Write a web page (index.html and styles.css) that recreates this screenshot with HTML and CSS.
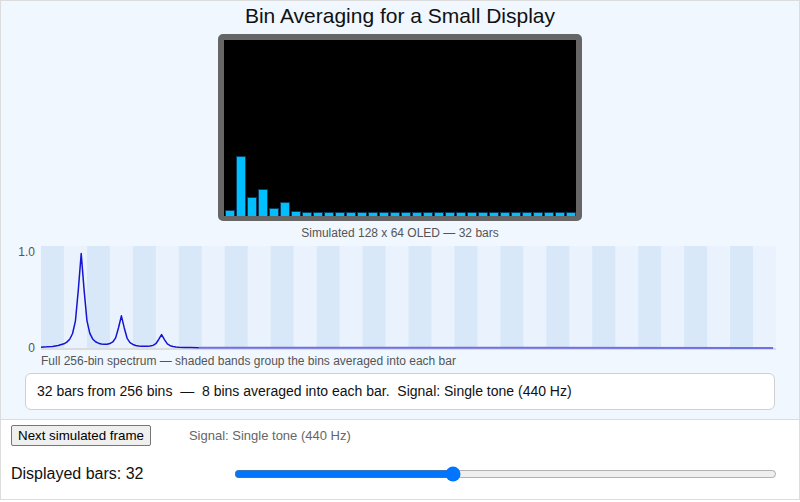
FILE: index.html
```html
<!DOCTYPE html>
<html>
<head>
<meta charset="utf-8">
<title>Bin Averaging for a Small Display</title>
<link rel="stylesheet" href="styles.css">
</head>
<body>
<div class="app">
  <div class="stage">
    <h1 class="title">Bin Averaging for a Small Display</h1>
    <div class="oled">
      <div class="screen">
        <div class="bar" style="height:6px"></div>
        <div class="bar" style="height:60px"></div>
        <div class="bar" style="height:19px"></div>
        <div class="bar" style="height:27px"></div>
        <div class="bar" style="height:8px"></div>
        <div class="bar" style="height:14px"></div>
        <div class="bar" style="height:5px"></div>
        <div class="bar" style="height:4px"></div>
        <div class="bar" style="height:4px"></div>
        <div class="bar" style="height:4px"></div>
        <div class="bar" style="height:4px"></div>
        <div class="bar" style="height:4px"></div>
        <div class="bar" style="height:4px"></div>
        <div class="bar" style="height:4px"></div>
        <div class="bar" style="height:4px"></div>
        <div class="bar" style="height:4px"></div>
        <div class="bar" style="height:4px"></div>
        <div class="bar" style="height:4px"></div>
        <div class="bar" style="height:4px"></div>
        <div class="bar" style="height:4px"></div>
        <div class="bar" style="height:4px"></div>
        <div class="bar" style="height:4px"></div>
        <div class="bar" style="height:4px"></div>
        <div class="bar" style="height:4px"></div>
        <div class="bar" style="height:4px"></div>
        <div class="bar" style="height:4px"></div>
        <div class="bar" style="height:4px"></div>
        <div class="bar" style="height:4px"></div>
        <div class="bar" style="height:4px"></div>
        <div class="bar" style="height:4px"></div>
        <div class="bar" style="height:4px"></div>
        <div class="bar" style="height:4px"></div>
      </div>
    </div>
    <p class="caption">Simulated 128 x 64 OLED — 32 bars</p>
    <svg class="spectrum" width="800" height="112" viewBox="0 0 800 112">
      <rect class="band-light" x="40" y="4" width="735" height="102"/>
      <g class="band-dark">
        <rect x="40" y="4" width="22.97" height="102"/>
        <rect x="85.94" y="4" width="22.97" height="102"/>
        <rect x="131.88" y="4" width="22.97" height="102"/>
        <rect x="177.81" y="4" width="22.97" height="102"/>
        <rect x="223.75" y="4" width="22.97" height="102"/>
        <rect x="269.69" y="4" width="22.97" height="102"/>
        <rect x="315.63" y="4" width="22.97" height="102"/>
        <rect x="361.56" y="4" width="22.97" height="102"/>
        <rect x="407.5" y="4" width="22.97" height="102"/>
        <rect x="453.44" y="4" width="22.97" height="102"/>
        <rect x="499.38" y="4" width="22.97" height="102"/>
        <rect x="545.31" y="4" width="22.97" height="102"/>
        <rect x="591.25" y="4" width="22.97" height="102"/>
        <rect x="637.19" y="4" width="22.97" height="102"/>
        <rect x="683.13" y="4" width="22.97" height="102"/>
        <rect x="729.06" y="4" width="22.97" height="102"/>
      </g>
      <rect class="axis" x="40" y="106" width="735" height="2"/>
      <polyline class="curve" points="40,105.16 45.74,104.87 51.48,104.41 57.23,103.56 62.97,101.82 65.84,100.14 68.71,97.22 71.58,91.5 74.45,78.8 77.32,47.7 80.2,11.6 83.07,47.6 85.94,78.6 88.81,91.3 91.68,96.93 94.55,99.76 97.42,101.2 100.29,101.97 103.16,102.29 106.04,102.21 108.91,101.58 111.78,99.95 114.65,95.87 117.52,85.74 120.39,73.84 123.26,85.94 126.13,96.3 129,100.55 131.88,102.45 134.75,103.44 137.62,103.96 140.49,104.24 143.36,104.37 146.23,104.31 149.1,104.04 151.97,103.37 154.84,101.71 157.71,97.49 160.59,92.58 163.46,97.58 166.33,101.9 169.2,103.68 172.07,104.48 174.94,104.92 177.81,105.16 183.55,105.43 189.3,105.59 197.91,105.71"/>
      <line class="flat" x1="197.91" y1="105.7" x2="772.13" y2="105.9"/>
      <text class="tick" x="34" y="14">1.0</text>
      <text class="tick" x="34" y="110">0</text>
    </svg>
    <p class="note">Full 256-bin spectrum — shaded bands group the bins averaged into each bar</p>
    <div class="info">32 bars from 256 bins  —  8 bins averaged into each bar.  Signal: Single tone (440 Hz)</div>
  </div>
  <div class="controls">
    <div class="row">
      <button class="btn" type="button">Next simulated frame</button>
      <span class="signal">Signal: Single tone (440 Hz)</span>
    </div>
    <div class="row slider-row">
      <label class="bars-label" for="bars">Displayed bars: 32</label>
      <input class="slider" id="bars" type="range" min="0" max="80" value="32">
    </div>
  </div>
</div>
</body>
</html>
```
FILE: styles.css
```css
html, body {
  margin: 0;
  padding: 0;
  background: #ffffff;
}

body {
  font-family: "Liberation Sans", Arial, sans-serif;
  color: #111;
}

.app {
  width: 800px;
  height: 500px;
  box-sizing: border-box;
  border: 1px solid #dcdcdc;
  display: flex;
  flex-direction: column;
}

.stage {
  height: 418px;
  flex: none;
  background: #f0f7ff;
  border-bottom: 1px solid #dcdcdc;
  display: flex;
  flex-direction: column;
}

.title {
  margin: 0;
  padding-top: 3px;
  font-size: 21px;
  line-height: 24px;
  font-weight: normal;
  text-align: center;
  color: #111;
}

.oled {
  margin: 6px auto 0;
  width: 364px;
  box-sizing: border-box;
  border-style: solid;
  border-color: #666;
  border-width: 6px 6px 5px 6px;
  border-radius: 5px;
  background: #666;
}

.screen {
  height: 176px;
  background: #000;
  display: flex;
  align-items: flex-end;
  gap: 1px;
  padding-left: 1px;
}

.bar {
  width: 10px;
  flex: none;
  box-sizing: border-box;
  background: #00bfff;
  border: 1px solid #0a3d5e;
  border-bottom: none;
}

.caption {
  margin: 5px 0 0;
  font-size: 12px;
  line-height: 14px;
  text-align: center;
  color: #555;
}

.spectrum {
  display: block;
  margin-top: 2px;
  flex: none;
  overflow: visible;
}

.band-light { fill: #eaf3fd; }
.band-dark rect { fill: #d9e8f8; }
.axis { fill: #dcdcdc; }

.curve {
  fill: none;
  stroke: #1414d2;
  stroke-width: 1.5;
  stroke-linejoin: round;
}

.flat {
  stroke: #6f6fe8;
  stroke-width: 2;
}

.tick {
  font-family: "Liberation Sans", Arial, sans-serif;
  font-size: 12px;
  fill: #555;
  text-anchor: end;
}

.note {
  margin: 0;
  padding-left: 40px;
  font-size: 12px;
  line-height: 14px;
  color: #555;
}

.info {
  margin: 5px 24px 0 24px;
  box-sizing: border-box;
  background: #fff;
  border: 1px solid #d0d0d0;
  border-radius: 6px;
  padding: 9px 11px;
  font-size: 14px;
  line-height: 17px;
  color: #111;
  white-space: pre;
}

.controls {
  padding: 5px 10px 0;
  display: flex;
  flex-direction: column;
  gap: 19px;
}

.row {
  display: flex;
  align-items: center;
}

.btn {
  height: 21px;
  padding: 0 6px;
  font-family: "Liberation Sans", Arial, sans-serif;
  font-size: 13.33px;
  color: #000;
  background: #efefef;
  border: 1px solid #767676;
  border-radius: 2px;
}

.signal {
  margin-left: 38px;
  font-size: 13px;
  color: #666;
}

.bars-label {
  width: 223px;
  flex: none;
  font-size: 16px;
  line-height: 18px;
  color: #111;
}

.slider {
  width: 543px;
  margin: 0;
  accent-color: #0075ff;
}
```
